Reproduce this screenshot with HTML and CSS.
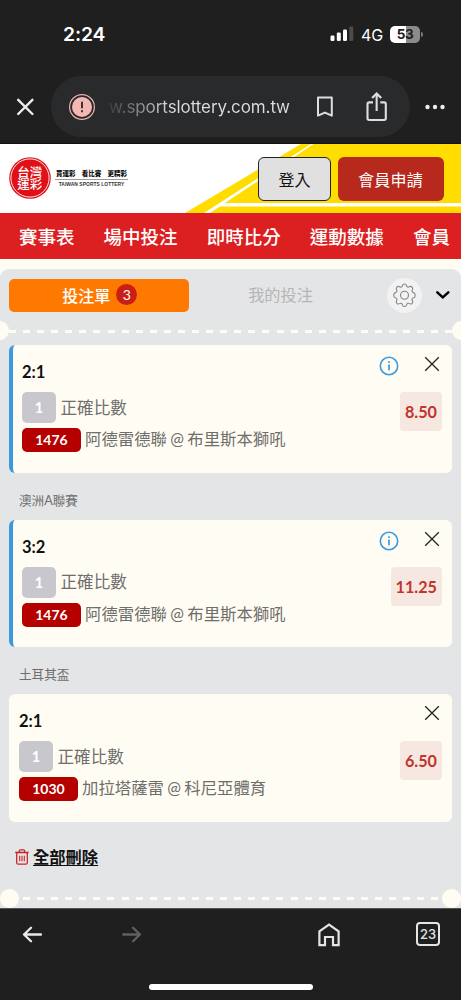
FILE: index.html
```html
<!DOCTYPE html>
<html lang="zh-Hant">
<head>
<meta charset="utf-8">
<title>台灣運彩</title>
<link rel="stylesheet" href="styles.css">
</head>
<body>
<div class="phone">
  <header class="chrome-top">
    <div class="status">
      <span class="clock">2:24</span>
      <div class="status-right">
        <svg class="signal" width="24" height="16" viewBox="0 0 24 16"><rect x="0.5" y="9.5" width="4" height="5.5" rx="1.3" fill="#fff"/><rect x="6.8" y="6.5" width="4" height="8.5" rx="1.3" fill="#fff"/><rect x="13" y="3.5" width="4" height="11.5" rx="1.3" fill="#fff"/><rect x="19.3" y="0.5" width="4" height="14.5" rx="1.3" fill="#4b4b4b"/></svg>
        <span class="net">4G</span>
        <div class="battery"><span>53</span></div>
        <i class="battery-tip"></i>
      </div>
    </div>
    <div class="toolbar">
      <svg class="close" width="18" height="18" viewBox="0 0 18 18"><path d="M2.2 1.8 16.4 16M16.4 1.8 2.2 16" stroke="#ececec" stroke-width="2.4" stroke-linecap="round"/></svg>
      <div class="omnibox">
        <svg width="28" height="28" viewBox="0 0 28 28"><circle cx="14" cy="14" r="12.4" fill="none" stroke="#e9b1ac" stroke-width="1.2"/><circle cx="14" cy="14" r="10" fill="#f4b8b3"/><path d="M14 8.8v6.4M14 17.2v2" stroke="#3a2b2b" stroke-width="1.9"/></svg>
        <span class="url">w.sportslottery.com.tw</span>
        <svg class="bookmark" width="18" height="22" viewBox="0 0 18 22"><path d="M2 1.5h13.8v18.2L8.9 16.6 2 19.7z" fill="none" stroke="#dedede" stroke-width="2" stroke-linejoin="round"/></svg>
        <svg class="share" width="24" height="30" viewBox="0 0 24 30"><path d="M8 10.4H4.2q-1.7 0-1.7 1.7v14.2q0 1.7 1.7 1.7h14.900q1.700 0 1.700-1.700V12.100q0-1.700-1.700-1.700H15.300M11.650 19V3" fill="none" stroke="#dedede" stroke-width="2.100"/><path d="M7.100 6 11.650 1.600 16.200 6" fill="none" stroke="#dedede" stroke-width="2.300"/></svg>
      </div>
      <svg class="more" width="22" height="6" viewBox="0 0 22 6"><g fill="#ececec"><circle cx="2.500" cy="3" r="2.200"/><circle cx="10" cy="3" r="2.200"/><circle cx="17.500" cy="3" r="2.200"/></g></svg>
    </div>
  </header>

  <div class="site-head">
    <svg class="court" width="461" height="69" viewBox="0 0 461 69"><path d="M301 0H461V69H185z" fill="#fd0"/><path d="M311 0h2.500L213 67 210 69H204z" fill="#fff"/><path d="M220 59H461v3.500H215z" fill="#fff"/></svg>
    <div class="brand">
      <svg width="42" height="42" viewBox="0 0 42 42"><circle cx="21" cy="21" r="20.800" fill="#e01018"/><circle cx="21" cy="21" r="19.100" fill="none" stroke="#fff" stroke-width=".9"/><text class="seal" x="20.800" y="19.500">台灣</text><text class="seal" x="20.800" y="31.800">運彩</text></svg>
      <div class="tagline">
        <div class="slogan"><span>買運彩</span><span>看比賽</span><span>更精彩</span></div>
        <div class="latin">TAIWAN SPORTS LOTTERY</div>
      </div>
    </div>
    <div class="account"><button class="btn login">登入</button><button class="btn join">會員申請</button></div>
  </div>

  <nav class="nav"><a>賽事表</a><a>場中投注</a><a>即時比分</a><a>運動數據</a><a>會員</a></nav>

  <main class="panel">
    <div class="tabs">
      <div class="tab active">投注單<b class="count">3</b></div>
      <div class="tab">我的投注</div>
      <div class="gear"><svg width="25" height="25" viewBox="0 0 25 25" fill="none" stroke="#858585" stroke-width="1.100"><path d="M12.500 1c1.300 0 1.800.6 2.100 1.600.4 1.500 1.500 2 2.800 1.200 1-.6 1.800-.6 2.700.3s.9 1.700.3 2.700c-.8 1.300-.3 2.400 1.200 2.800 1 .3 1.600.8 1.600 2.900s-.6 2-1.600 2.300c-1.500.4-2 1.500-1.200 2.800.6 1 .6 1.800-.3 2.700s-1.700.9-2.700.3c-1.300-.8-2.400-.3-2.800 1.200-.3 1-.8 1.700-2.100 1.700s-1.800-.7-2.100-1.700c-.4-1.500-1.500-2-2.800-1.200-1 .6-1.800.6-2.700-.3s-.9-1.700-.3-2.700c.8-1.300.3-2.400-1.200-2.800-1-.3-1.700-.8-1.700-2.300s.7-2.600 1.700-2.900c1.500-.4 2-1.500 1.200-2.800-.6-1-.6-1.800.3-2.700s1.700-.9 2.700-.3c1.300.8 2.400.3 2.800-1.200.3-1 .8-1.600 2.100-1.600z" stroke-linejoin="round"/><circle cx="12.500" cy="12.300" r="4"/></svg></div>
      <svg class="chev" width="16" height="10" viewBox="0 0 16 10"><path d="M2.300 2.300l5.500 5L13.300 2.300" fill="none" stroke="#000" stroke-width="2.500" stroke-linecap="round"/></svg>
    </div>
    <div class="tear first"><i></i><span></span><i></i></div>

    <section class="card live">
      <div class="pick">
        <h2>2:1</h2>
        <p><b class="chip">1</b><span>正確比數</span></p>
        <p><b class="code">1476</b><span>阿德雷德聯 @ 布里斯本獅吼</span></p>
      </div>
      <div class="side">
        <div class="acts"><svg width="20" height="20" viewBox="0 0 20 20"><circle cx="10" cy="10" r="8.700" fill="none" stroke="#3b9ade" stroke-width="1.600"/><path d="M10 8.600V14.300M10 5.300v1.700" stroke="#3b9ade" stroke-width="1.700"/></svg><svg class="x" width="16" height="16" viewBox="0 0 16 16"><path d="M1.200 1.200 14.800 14.800M14.800 1.200 1.200 14.800" stroke="#222" stroke-width="1.300"/></svg></div>
        <b class="odds">8.50</b>
      </div>
    </section>
    <h3>澳洲A聯賽</h3>
    <section class="card live">
      <div class="pick">
        <h2>3:2</h2>
        <p><b class="chip">1</b><span>正確比數</span></p>
        <p><b class="code">1476</b><span>阿德雷德聯 @ 布里斯本獅吼</span></p>
      </div>
      <div class="side">
        <div class="acts"><svg width="20" height="20" viewBox="0 0 20 20"><circle cx="10" cy="10" r="8.700" fill="none" stroke="#3b9ade" stroke-width="1.600"/><path d="M10 8.600V14.300M10 5.300v1.700" stroke="#3b9ade" stroke-width="1.700"/></svg><svg class="x" width="16" height="16" viewBox="0 0 16 16"><path d="M1.200 1.200 14.800 14.800M14.800 1.200 1.200 14.800" stroke="#222" stroke-width="1.300"/></svg></div>
        <b class="odds">11.25</b>
      </div>
    </section>
    <h3>土耳其盃</h3>
    <section class="card">
      <div class="pick">
        <h2>2:1</h2>
        <p><b class="chip">1</b><span>正確比數</span></p>
        <p><b class="code">1030</b><span>加拉塔薩雷 @ 科尼亞體育</span></p>
      </div>
      <div class="side">
        <div class="acts"><svg class="x" width="16" height="16" viewBox="0 0 16 16"><path d="M1.200 1.200 14.800 14.800M14.800 1.200 1.200 14.800" stroke="#222" stroke-width="1.300"/></svg></div>
        <b class="odds">6.50</b>
      </div>
    </section>
    <div class="clear"><svg width="14" height="16" viewBox="0 0 14 16" fill="none" stroke="#c8252a"><path d="M.2 3.500h13.400" stroke-width="1.600"/><path d="M4.300 3.500V2q0-1.200 1.200-1.200h3q1.200 0 1.200 1.200v1.500M1.700 4v9.700q0 1.500 1.500 1.500h7.600q1.500 0 1.500-1.500V4" stroke-width="1.300"/><path d="M4.700 6.800v5.500M7 6.800v5.500M9.300 6.800v5.500" stroke-width="1.100"/></svg><a>全部刪除</a></div>
    <div class="tear last"><i></i><span></span><i></i></div>
  </main>

  <footer class="chrome-bottom">
    <div class="controls">
      <svg width="20" height="18" viewBox="0 0 20 18"><path d="M19 8.500H2M9 1.700 2 8.500l7 6.800" fill="none" stroke="#e9e9e9" stroke-width="2.300" stroke-linecap="round" stroke-linejoin="round"/></svg>
      <svg class="fwd" width="20" height="18" viewBox="0 0 20 18"><path d="M1.200 8.500H18M11 1.700l7 6.800-7 6.800" fill="none" stroke="#5f6064" stroke-width="2.300" stroke-linecap="round" stroke-linejoin="round"/></svg>
      <svg class="home" width="24" height="25" viewBox="0 0 24 25"><path d="M2.400 8.400 12 1.500l9.600 6.900v13.800h-5.600V14H8v8.200H2.400z" fill="none" stroke="#e4e4e4" stroke-width="2.200"/></svg>
      <div class="count-tabs">23</div>
    </div>
    <div class="homebar"></div>
  </footer>
</div>
</body>
</html>
```
FILE: styles.css
```css
* { box-sizing: border-box; }
body { margin: 0; background: #1f1f1f; }
h2, h3, p { margin: 0; font-weight: 400; }
svg { display: block; flex: none; }
.phone { width: 461px; height: 1000px; overflow: hidden; display: flex; flex-direction: column; background: #fffdf3; font-family: Lato, "Noto Sans CJK TC", sans-serif; }

.chrome-top { flex: none; height: 144px; background: #1f1f1f; border-bottom: 1px solid #111; color: #fff; font-family: Inter, sans-serif; }
.status { height: 76px; padding: 0 38px 8px 63px; display: flex; align-items: center; justify-content: space-between; }
.clock { font-size: 19.300px; font-weight: 600; letter-spacing: -.1px; }
.status-right { display: flex; align-items: center; }
.net { margin: 1px 0 0 7px; width: 23px; font-size: 16px; white-space: nowrap; }
.battery { margin-left: 6px; width: 30px; height: 17px; border-radius: 5px; background: linear-gradient(90deg, #fff 53%, #8b8b8b 53%); color: #202020; font-size: 13.500px; font-weight: 700; line-height: 17px; text-align: center; letter-spacing: -.3px; }
.battery-tip { width: 2px; height: 5px; margin-left: 1px; border-radius: 0 2px 2px 0; background: #777; }
.toolbar { display: flex; align-items: center; height: 61px; padding-left: 16px; }
.omnibox { display: flex; align-items: center; width: 359px; height: 61px; margin-left: 17px; padding-left: 17px; border-radius: 31px; background: #292a2c; }
.url { width: 182px; margin-left: 13px; font-size: 17px; letter-spacing: -.080px; white-space: nowrap; background: linear-gradient(90deg, #3c3c3d, #dedede 34%); background-clip: text; color: transparent; }
.bookmark { margin-left: 25px; }
.share { margin-left: 30.500px; }
.more { margin-left: 15px; }

.site-head { position: relative; flex: none; display: flex; justify-content: space-between; height: 69px; padding: 13px 17.500px 0 9px; background: #fff; }
.court { position: absolute; left: 0; top: 0; }
.brand { display: flex; }
.seal { font: 500 12.500px/12px "Noto Sans CJK TC", sans-serif; fill: #fff; text-anchor: middle; }
.tagline { width: 73px; margin: 10px 0 0 4px; }
.slogan { display: flex; justify-content: space-between; padding: 0 1px; height: 13px; border-bottom: 1px solid #999; font: 900 6.500px/12px "Noto Sans CJK TC", sans-serif; color: #111; }
.latin { margin-top: 1px; font: 700 4.900px/7px "Liberation Sans", sans-serif; letter-spacing: .060px; text-align: center; white-space: nowrap; color: #333; }
.account { position: relative; display: flex; gap: 6.500px; }
.btn { height: 44px; padding: 0 0 1px; border: 0; border-radius: 6px; font: 400 16px "Noto Sans CJK TC", sans-serif; }
.login { width: 73px; border: 1px solid #222; background: #e0e0e0; color: #111; }
.join { width: 106px; background: #b7291d; color: #fff; letter-spacing: .3px; }
.nav { flex: none; display: flex; align-items: center; gap: 29.100px; height: 46px; padding-left: 19px; background: #dc1f20; color: #fff; font: 500 18.500px "Noto Sans CJK TC", sans-serif; white-space: nowrap; }

.panel { flex: none; height: 639px; margin-top: 10px; background: #e4e5e7; border-radius: 9px 9px 0 0; }
.tabs { display: flex; align-items: center; height: 52px; padding-left: 9px; }
.tab { width: 179.500px; height: 33px; display: flex; align-items: center; justify-content: center; padding-bottom: 2px; border-radius: 5px; color: #b5b5b6; font-size: 16.200px; }
.tab + .tab { width: 184px; }
.tab.active { padding: 0 0 1px 2px; background: #ff7900; color: #fff; font-weight: 500; font-size: 16px; }
.count { width: 21px; height: 21px; margin-left: 6px; border-radius: 50%; background: #c91f17; font-size: 14px; font-weight: 400; line-height: 21px; text-align: center; }
.gear { width: 35px; height: 35px; margin-left: 14px; border-radius: 50%; background: #f2f2f2; display: grid; place-items: center; }
.chev { margin-left: 13px; }
.tear { display: flex; align-items: center; height: 19px; }
.tear i { width: 19px; height: 19px; border-radius: 50%; background: #fffdf3; flex: none; }
.tear span { flex: 1; height: 3px; margin-top: 1px; background: repeating-linear-gradient(90deg, transparent 0 4px, #fffdf3 4px 11px, transparent 11px 14.080px); }
.tear.first i { margin-left: -10px; }
.tear.first i:last-child { margin: 0 -10px 0 0; }
.tear.first { overflow: hidden; }
.tear.first span { background: repeating-linear-gradient(90deg, #fffdf3 0 7px, transparent 7px 14.080px); }
.card { display: flex; justify-content: space-between; height: 127.500px; margin: 5px 9px 0; padding-left: 10px; border-radius: 6px; background: #fffdf3; }
.live { border-left: 4px solid #3b9ade; padding-left: 9px; }
.pick { padding-top: 17px; }
.pick h2 { height: 30px; font-size: 16.500px; line-height: 21px; font-weight: 700; color: #111; }
.pick p { display: flex; align-items: center; height: 31px; font-size: 16.600px; color: #6e6e6c; white-space: nowrap; }
.pick p span { padding-bottom: 2px; }
.pick p + p { height: 24px; margin-top: 5px; font-size: 16.400px; word-spacing: -.9px; }
.pick p + p span { padding-bottom: 4px; }
.chip { width: 34px; height: 31px; margin-right: 4.500px; border-radius: 5px; background: #c8c7ce; color: #fff; font-size: 14.500px; line-height: 31px; text-align: center; }
.code { width: 59px; height: 24px; margin-right: 4px; border-radius: 5px; background: #b50000; color: #fff; font-size: 14px; line-height: 24px; text-align: center; }
.side { display: flex; flex-direction: column; align-items: flex-end; padding: 11px 10px 0 0; }
.acts { display: flex; gap: 25px; height: 36px; }
.acts .x { margin-right: 2px; }
.odds { height: 39px; padding: 0 5px; border-radius: 4px; background: #f7e7e1; color: #c0342b; font-size: 16.200px; line-height: 40px; }
h3 { height: 47px; padding: 0 19px; font-size: 12.600px; line-height: 56px; color: #6e6e6c; }
h3 + .card { margin-top: 0; }
.clear { display: flex; align-items: center; gap: 4px; height: 36px; padding-left: 15px; margin-top: 17px; font-size: 16.300px; }
.clear a { padding-bottom: 1px; color: #111; font-weight: 700; text-decoration: underline; text-decoration-thickness: 1px; text-underline-offset: 2px; }
.tear.last { margin-top: 14px; }

.chrome-bottom { flex: none; height: 92px; background: #1f1f1f; border-top: 1px solid #555; }
.controls { display: flex; align-items: center; height: 52px; padding-left: 22px; }
.fwd { margin-left: 80px; }
.home { margin-left: 175px; }
.count-tabs { width: 24px; height: 24px; margin: -2px 0 0 75px; border: 2px solid #e4e4e4; border-radius: 4px; color: #e4e4e4; font: 500 13px/20px Inter, sans-serif; display: flex; justify-content: center; }
.homebar { width: 164px; height: 6px; margin: 23px 0 0 149px; border-radius: 3px; background: #fff; }
```
